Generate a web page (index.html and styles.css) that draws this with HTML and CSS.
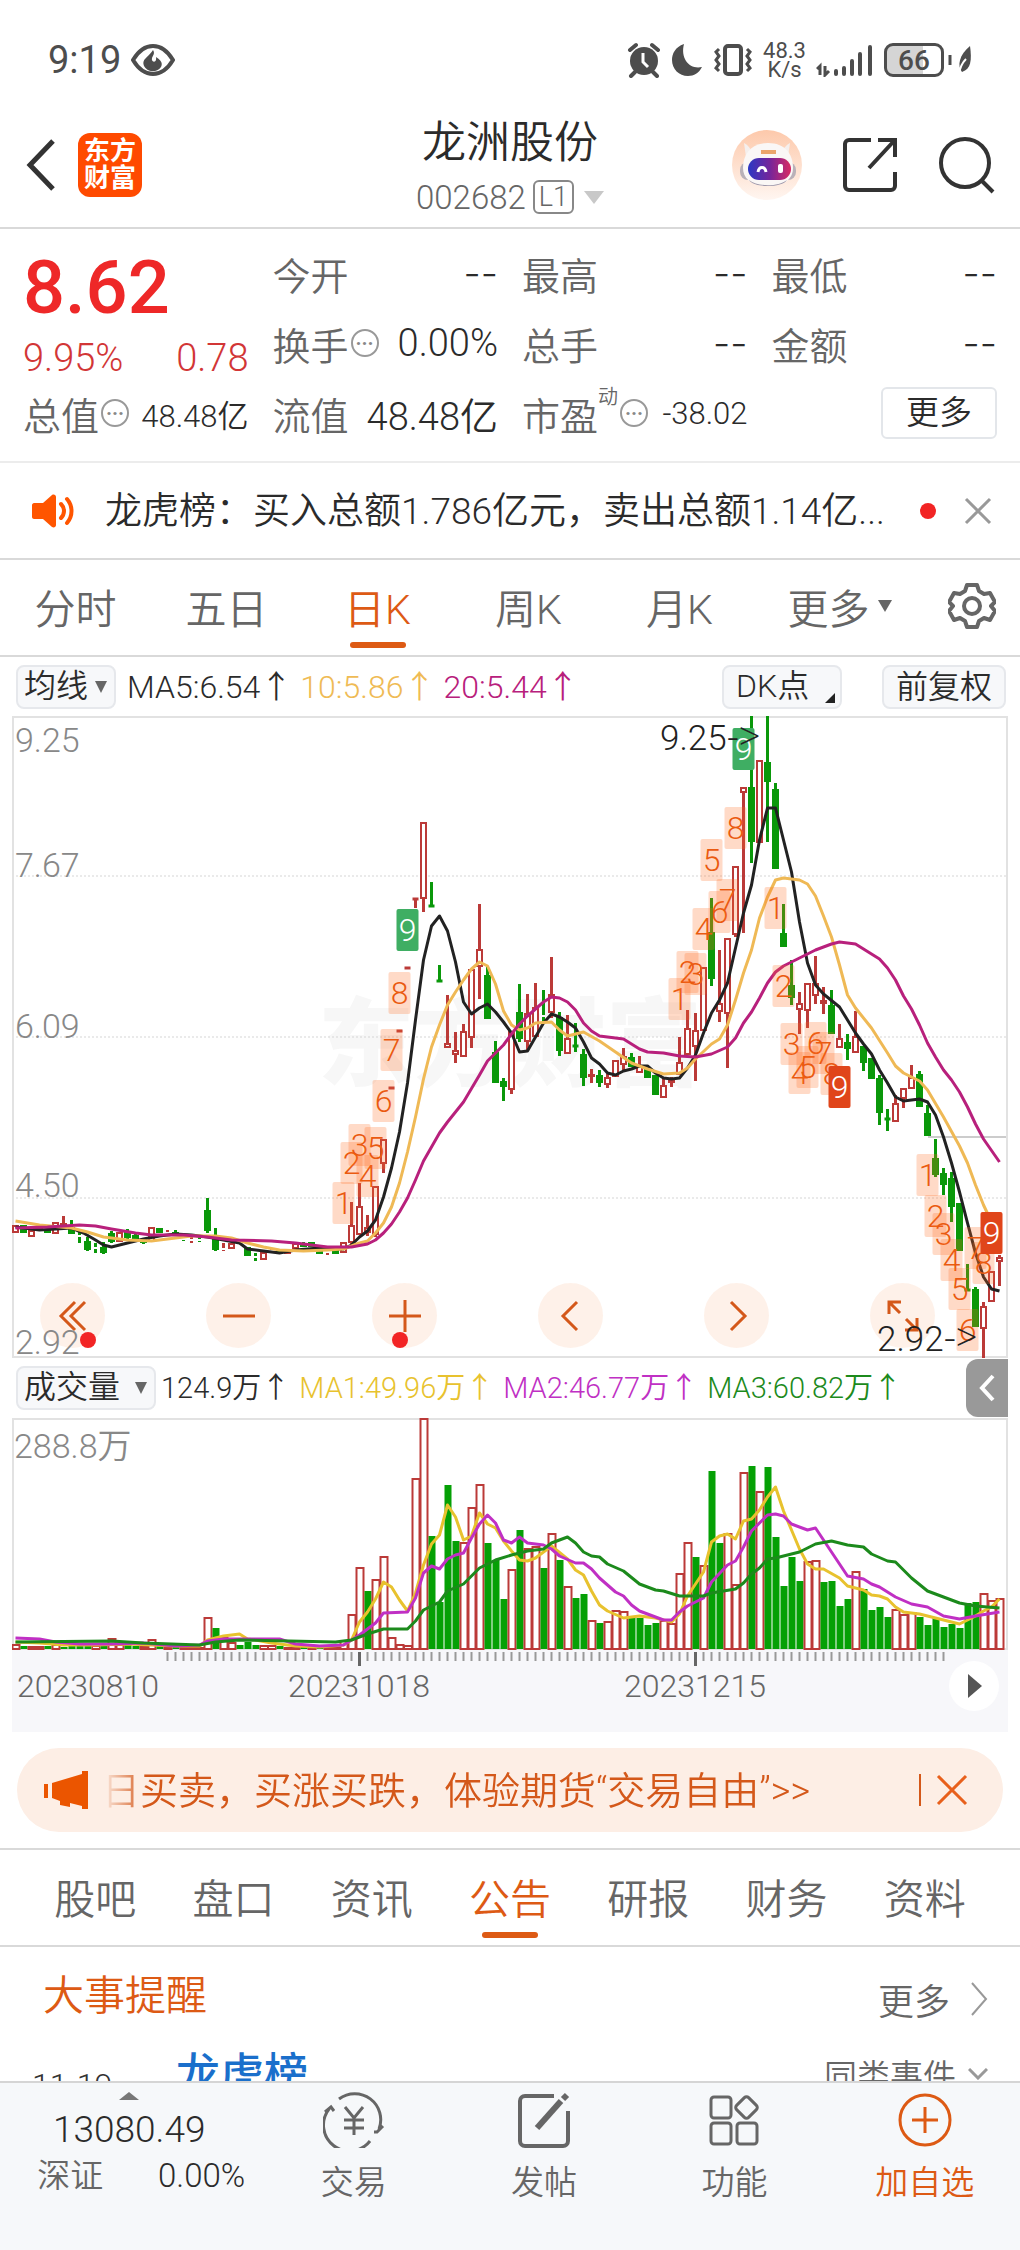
FILE: index.html
```html
<!DOCTYPE html>
<html lang="zh-CN">
<head>
  <meta charset="UTF-8" />
  <meta name="viewport" content="width=device-width, initial-scale=1.0" />
  <title>龙洲股份 002682</title>
  <link rel="stylesheet" href="styles.css">
</head>
<body>
  <div class="status-bar">
    <span class="clock">9:19</span>
    <svg class="eye" width="44" height="32" viewBox="0 0 44 32"><path d="M2 16C8 6 14 2 22 2s14 4 20 14c-6 10-12 14-20 14S8 26 2 16z" fill="none" stroke="#4d4d4d" stroke-width="4"/><path d="M22 6c3 5-2 6-1 10 1 3 5 2 4-3 5 3 7 6 5 10a10 10 0 0 1-17-1c-3-7 5-9 9-16z" fill="#4d4d4d"/></svg>
    <div class="status-icons">
      <svg width="34" height="36" viewBox="0 0 34 36"><g stroke="#4d4d4d" stroke-width="4" stroke-linecap="round"><path d="M3 8l6-5M31 8l-6-5M8 30l-4 4M26 30l4 4"/></g><circle cx="17" cy="19" r="14" fill="#4d4d4d"/><path d="M16 11v9l5 5" fill="none" stroke="#fff" stroke-width="3"/></svg>
      <svg width="32" height="34" viewBox="0 0 32 34"><path d="M13 1C4 4 1 11 1 17c0 9 7 16 16 16 6 0 11-3 14-9C19 27 9 16 13 1z" fill="#4d4d4d"/></svg>
      <svg width="40" height="34" viewBox="0 0 40 34"><rect x="12" y="3" width="16" height="28" rx="3" fill="none" stroke="#4d4d4d" stroke-width="4"/><path d="M6 6l-3 3 3 4-3 4 3 4-3 4 3 3M34 6l3 3-3 4 3 4-3 4 3 4-3 3" fill="none" stroke="#4d4d4d" stroke-width="3"/></svg>
      <span class="speed">48.3<br>K/s</span>
      <svg class="signal" width="58" height="34" viewBox="0 0 58 34"><g stroke="#4d4d4d" stroke-width="4" stroke-linecap="round"><path d="M20 28v3M28 25v6M36 18v13M44 11v20M54 4v27"/></g><path d="M4 32V23l-3 3M9 23v9l4-4" fill="none" stroke="#4d4d4d" stroke-width="3"/></svg>
      <span class="battery">66</span>
      <svg width="24" height="30" viewBox="0 0 24 30"><path d="M2 10v10" stroke="#4d4d4d" stroke-width="3"/><path d="M22 1c2 14 1 23-8 26-5-6-3-17 8-26z" fill="#4d4d4d"/><path d="M11 29c1-7 4-12 7-15" stroke="#fff" stroke-width="2" fill="none"/></svg>
    </div>
  </div>

  <header class="header">
    <div class="header-left">
      <button class="icon-btn" aria-label="返回"><svg width="34" height="54" viewBox="0 0 34 54"><path d="M29 3L6 27l23 24" fill="none" stroke="#333" stroke-width="5"/></svg></button>
      <div class="logo">东方<br>财富</div>
    </div>
    <div class="header-title">
      <h1>龙洲股份</h1>
      <div class="code">002682<span class="level">L1</span><i class="tri"></i></div>
    </div>
    <div class="header-right">
      <button class="icon-btn" aria-label="助手">
        <svg width="70" height="70" viewBox="0 0 70 70">
          <defs>
            <linearGradient id="halo" x1="0" y1="0" x2="0" y2="1"><stop offset="0" stop-color="#fdc9ab"/><stop offset="1" stop-color="#fff6f1"/></linearGradient>
            <linearGradient id="visor"><stop offset="0" stop-color="#2b38c4"/><stop offset="0.5" stop-color="#74259b"/><stop offset="1" stop-color="#d82a63"/></linearGradient>
          </defs>
          <circle cx="35" cy="35" r="35" fill="url(#halo)"/>
          <path d="M12 13c4 2 7 6 8 10l-6 4zM58 13c-4 2-7 6-8 10l6 4z" fill="#f5efed"/>
          <rect x="8" y="32" width="56" height="18" rx="8" fill="#b9b1b8"/>
          <path d="M36 13c17 0 25 11 25 25 0 11-9 18-25 18S11 49 11 38c0-14 8-25 25-25z" fill="#faf7f6"/>
          <path d="M17 50c9 7 29 7 38 0-5 8-33 8-38 0z" fill="#9c95a8"/>
          <rect x="16" y="28" width="43" height="22" rx="11" fill="url(#visor)"/>
          <path d="M26 42c1-6 7-6 8 0" fill="none" stroke="#fff" stroke-width="3"/>
          <rect x="46" y="34" width="5" height="9" rx="2" fill="#fff"/>
          <path d="M29 22h15" stroke="#eba66c" stroke-width="4"/>
        </svg>
      </button>
      <button class="icon-btn" aria-label="分享"><svg width="56" height="56" viewBox="0 0 56 56"><path d="M29 3H7a4 4 0 0 0-4 4v42a4 4 0 0 0 4 4h42a4 4 0 0 0 4-4V35M36 3h17v17M52 4L27 31" fill="none" stroke="#333" stroke-width="4"/></svg></button>
      <button class="icon-btn" aria-label="搜索"><svg width="58" height="58" viewBox="0 0 58 58"><circle cx="27" cy="27" r="24" fill="none" stroke="#333" stroke-width="4"/><path d="M43 44l12 12" stroke="#333" stroke-width="4"/></svg></button>
    </div>
  </header>

  <main class="content">
    <section class="quote">
      <div class="quote-col">
        <div class="price">8.62</div>
        <div class="change"><span>9.95%</span><span>0.78</span></div>
        <div class="item"><span class="label">总值</span><i class="info">···</i><span class="value small">48.48亿</span></div>
      </div>
      <div class="quote-col">
        <div class="item"><span class="label">今开</span><span class="value none">--</span></div>
        <div class="item"><span class="label">换手</span><i class="info">···</i><span class="value">0.00%</span></div>
        <div class="item"><span class="label">流值</span><span class="value">48.48亿</span></div>
      </div>
      <div class="quote-col">
        <div class="item"><span class="label">最高</span><span class="value none">--</span></div>
        <div class="item"><span class="label">总手</span><span class="value none">--</span></div>
        <div class="item"><span class="label">市盈</span><sup>动</sup><i class="info">···</i><span class="value small">-38.02</span></div>
      </div>
      <div class="quote-col">
        <div class="item"><span class="label">最低</span><span class="value none">--</span></div>
        <div class="item"><span class="label">金额</span><span class="value none">--</span></div>
        <div class="item"><button class="more-btn">更多</button></div>
      </div>
    </section>

    <section class="news">
      <svg width="42" height="36" viewBox="0 0 42 36"><path d="M2 10h9L20 2c2-1 4 0 4 2v28c0 2-2 3-4 2l-9-8H2c-1 0-2-1-2-2V12c0-1 1-2 2-2z" fill="#ff5500"/><path d="M29 11c4 4 4 10 0 14M35 6c6 7 6 17 0 24" fill="none" stroke="#ff5500" stroke-width="4" stroke-linecap="round"/></svg>
      <a href="#" class="news-text">龙虎榜：买入总额1.786亿元，卖出总额1.14亿...</a>
      <i class="dot"></i>
      <button class="icon-btn" aria-label="关闭"><svg width="28" height="28" viewBox="0 0 28 28"><path d="M2 2l24 24M26 2L2 26" stroke="#999" stroke-width="3"/></svg></button>
    </section>

    <nav class="period-tabs">
      <button class="tab">分时</button>
      <button class="tab">五日</button>
      <button class="tab active">日K</button>
      <button class="tab">周K</button>
      <button class="tab">月K</button>
      <button class="tab more">更多<i class="tri dark"></i></button>
      <button class="tab" aria-label="设置"><svg width="48" height="48" viewBox="0 0 48 48" fill="none" stroke="#666" stroke-width="4" stroke-linejoin="round"><path d="M19 3h10l2 6 5 3 6-1 5 9-4 4 4 5-5 9-6-2-5 3-2 6H19l-2-6-5-3-6 2-5-9 4-5-4-4 5-9 6 1 5-3z"/><circle cx="24" cy="24" r="8"/></svg></button>
    </nav>

    <div class="toolbar">
      <label class="picker"><select aria-label="主图指标"><option>均线</option></select></label>
      <div class="legend">
        <span>MA5:6.54↑</span><span class="yellow">10:5.86↑</span><span class="pink">20:5.44↑</span>
      </div>
      <label class="picker corner"><select aria-label="DK点"><option>DK点</option></select></label>
      <button class="chip">前复权</button>
    </div>

    <div class="chart-box">
      <svg id="kline" class="chart" viewBox="0 0 996 642"></svg>
      <div class="controls">
        <button class="round" aria-label="最早"><svg width="30" height="32" viewBox="0 0 30 32"><path d="M17 2L3 16l14 14M27 2L13 16l14 14"/></svg><i class="dot"></i></button>
        <button class="round" aria-label="缩小"><svg width="32" height="32" viewBox="0 0 32 32"><path d="M0 16h32"/></svg></button>
        <button class="round" aria-label="放大"><svg width="32" height="32" viewBox="0 0 32 32"><path d="M0 16h32M16 0v32"/></svg><i class="dot left"></i></button>
        <button class="round" aria-label="左移"><svg width="32" height="32" viewBox="0 0 32 32"><path d="M22 2L8 16l14 14"/></svg></button>
        <button class="round" aria-label="右移"><svg width="32" height="32" viewBox="0 0 32 32"><path d="M10 2l14 14-14 14"/></svg></button>
        <button class="round" aria-label="全屏"><svg width="32" height="32" viewBox="0 0 32 32"><path d="M14 2H2v12M2 2l11 11M30 18v12H18M30 30L19 19"/></svg></button>
      </div>
      <svg id="marks" class="chart marks" viewBox="0 0 996 642"></svg>
    </div>

    <div class="toolbar volume-bar">
      <label class="picker wide"><select aria-label="副图指标"><option>成交量</option></select></label>
      <div class="legend small">
        <span>124.9万↑</span><span class="gold">MA1:49.96万↑</span><span class="violet">MA2:46.77万↑</span><span class="green">MA3:60.82万↑</span>
      </div>
      <button class="fold" aria-label="收起"><svg width="18" height="28" viewBox="0 0 18 28"><path d="M15 2L4 14l11 12" fill="none" stroke="#fff" stroke-width="4"/></svg></button>
    </div>

    <div class="chart-box">
      <svg id="volume" class="chart" viewBox="0 0 996 232"></svg>
    </div>
    <div class="axis">
      <svg id="ticks" class="chart" viewBox="0 0 996 82"></svg>
      <button class="play" aria-label="播放"><svg width="14" height="24" viewBox="0 0 14 24"><path d="M0 0l14 12L0 24z" fill="#555"/></svg></button>
    </div>

    <div class="promo">
      <svg width="44" height="38" viewBox="0 0 44 38"><path d="M0 13h4v14H0zM8 12L38 3V0h6v38h-6v-3l-12-3v4l-10-2v-4l-8-3z" fill="#eb5500"/></svg>
      <a href="#" class="promo-text">日买卖，买涨买跌，体验期货“交易自由”&gt;&gt;</a>
      <button class="icon-btn close" aria-label="关闭广告"><svg width="32" height="32" viewBox="0 0 32 32"><path d="M2 2l28 28M30 2L2 30" stroke="#e8601c" stroke-width="3"/></svg></button>
    </div>

    <nav class="info-tabs">
      <button class="tab">股吧</button>
      <button class="tab">盘口</button>
      <button class="tab">资讯</button>
      <button class="tab active">公告</button>
      <button class="tab">研报</button>
      <button class="tab">财务</button>
      <button class="tab">资料</button>
    </nav>

    <section class="events">
      <div class="events-head">
        <h2>大事提醒</h2>
        <a href="#">更多<svg width="18" height="34" viewBox="0 0 18 34"><path d="M2 1l14 16L2 33" fill="none" stroke="#999" stroke-width="2"/></svg></a>
      </div>
      <div class="event">
        <time>11-19</time>
        <a href="#" class="event-name">龙虎榜</a>
        <a href="#" class="event-kind">同类事件<svg width="20" height="12" viewBox="0 0 20 12"><path d="M1 1l9 9 9-9" fill="none" stroke="#999" stroke-width="3"/></svg></a>
      </div>
    </section>
  </main>

  <footer class="bottom-bar">
    <div class="index">
      <i class="tri up"></i>
      <div class="index-value">13080.49</div>
      <div class="index-row"><span>深证</span><b>0.00%</b></div>
    </div>
    <button class="nav-item">
      <svg width="62" height="56" viewBox="0 0 62 56" fill="none" stroke="#666" stroke-width="3"><path d="M16 7a26 26 0 0 1 40 30M47 49A26 26 0 0 1 6 17M51 40l3 0 6-6M2 20l6-5 3 4" /><path d="M22 15l9 11 9-11M31 26v17M21 28h20M21 36h20"/></svg>
      <span>交易</span>
    </button>
    <button class="nav-item">
      <svg width="54" height="56" viewBox="0 0 54 56" fill="none" stroke="#666" stroke-width="4"><path d="M37 4H8a5 5 0 0 0-5 5v40a5 5 0 0 0 5 5h38a5 5 0 0 0 5-5V19"/><path d="M20 36l24-27" stroke-width="6"/><path d="M46 7l4-4" stroke-width="6"/></svg>
      <span>发帖</span>
    </button>
    <button class="nav-item">
      <svg width="52" height="56" viewBox="0 0 52 56" fill="none" stroke="#666" stroke-width="3"><rect x="3" y="5" width="20" height="21" rx="3"/><rect x="3" y="31" width="20" height="21" rx="3"/><rect x="29" y="31" width="20" height="21" rx="3"/><rect x="30" y="7" width="17" height="17" rx="3" transform="rotate(45 38.5 15.5)"/></svg>
      <span>功能</span>
    </button>
    <button class="nav-item add">
      <svg width="56" height="56" viewBox="0 0 56 56" fill="none" stroke="#dd5a14" stroke-width="3"><circle cx="28" cy="28" r="25"/><path d="M28 15v26M15 28h26"/></svg>
      <span>加自选</span>
    </button>
  </footer>

  <script src="chart.js"></script>
</body>
</html>
```
FILE: styles.css
```css
* {
  box-sizing: border-box;
  margin: 0;
  padding: 0;
}

body {
  height: 100vh;
  display: flex;
  flex-direction: column;
  overflow: hidden;
  font-family: Roboto, "Noto Sans CJK SC", sans-serif;
  font-weight: 350;
  color: #2b2b2b;
  background: #fff;
}

button,
select {
  font: inherit;
  color: inherit;
  border: none;
  background: none;
  appearance: none;
  cursor: pointer;
}

a {
  color: inherit;
  text-decoration: none;
}

i {
  font-style: normal;
}

svg {
  display: block;
  flex: none;
}

.icon-btn {
  display: flex;
  flex: none;
}

/* status bar */
.status-bar {
  flex: none;
  height: 103px;
  padding: 16px 48px 0;
  display: flex;
  align-items: center;
  color: #4d4d4d;
}

.clock {
  font-size: 38px;
  font-weight: 400;
  margin-right: 10px;
}

.status-icons {
  margin-left: auto;
  display: flex;
  align-items: center;
  gap: 10px;
}

.speed {
  font-size: 22px;
  line-height: 19px;
  font-weight: 400;
  text-align: center;
}

.battery {
  width: 60px;
  height: 34px;
  border: 3px solid #4d4d4d;
  border-radius: 9px;
  background: linear-gradient(90deg, #d5d5d5 66%, #fff 66%);
  font-size: 28px;
  line-height: 29px;
  font-weight: 500;
  text-align: center;
}

.battery + svg {
  margin-left: -6px;
}

/* header */
.header {
  flex: none;
  height: 126px;
  padding: 0 24px;
  display: grid;
  grid-template-columns: 1fr auto 1fr;
  border-bottom: 2px solid #d9d9d9;
}

.header-left,
.header-right {
  display: flex;
  align-items: center;
}

.header-left {
  gap: 20px;
}

.header-right {
  justify-content: flex-end;
  gap: 40px;
}

.logo {
  width: 64px;
  height: 64px;
  padding-top: 5px;
  border-radius: 12px;
  background: #ff4a00;
  color: #fff;
  font-size: 26px;
  line-height: 27px;
  font-weight: 700;
  text-align: center;
}

.header-title {
  padding-top: 10px;
  text-align: center;
}

h1 {
  font-size: 44px;
  line-height: 60px;
  font-weight: 350;
}

.code {
  height: 48px;
  display: flex;
  align-items: center;
  justify-content: center;
  font-size: 33px;
  color: #666;
}

.level {
  height: 34px;
  margin: 0 10px 0 7px;
  padding: 0 4px;
  border: 2px solid #888;
  border-radius: 6px;
  font-size: 27px;
  line-height: 30px;
}

.tri {
  border: 10px solid transparent;
  border-top: 13px solid #c8c8c8;
  border-bottom: 0;
}

.tri.dark {
  border-width: 12px 7px 0;
  border-top-color: #666;
  margin-left: 8px;
}

.tri.up {
  border-top: 0;
  border-bottom: 8px solid #777;
}

.content {
  flex: 1;
  min-height: 0;
  overflow: hidden;
}

/* quote */
.quote {
  display: grid;
  grid-template-columns: repeat(4, 1fr);
  gap: 24px;
  padding: 12px 23px 10px;
  border-bottom: 2px solid #ececec;
}

.price {
  font-size: 74px;
  line-height: 94px;
  font-weight: 500;
  color: #ee2828;
}

.change {
  display: flex;
  justify-content: space-between;
  font-size: 38px;
  line-height: 46px;
  color: #d23636;
}

.item {
  height: 70px;
  padding-bottom: 6px;
  display: flex;
  align-items: center;
}

.label {
  font-size: 38px;
  color: #666;
}

.value {
  margin-left: auto;
  font-size: 38px;
}

.value.small {
  font-size: 31px;
}

.value.none {
  font-family: Inter, sans-serif;
}

.info {
  width: 28px;
  height: 28px;
  margin-left: 2px;
  border: 2px solid #999;
  border-radius: 50%;
  color: #888;
  font-size: 20px;
  line-height: 24px;
  font-weight: 700;
  text-align: center;
}

.item sup {
  align-self: flex-start;
  font-size: 20px;
  line-height: 32px;
  color: #666;
}

.more-btn {
  width: 116px;
  height: 52px;
  margin-left: auto;
  border: 2px solid #e3e6ea;
  border-radius: 6px;
  font-size: 33px;
  line-height: 46px;
}

/* news */
.news {
  height: 97px;
  padding: 0 28px 0 32px;
  display: flex;
  align-items: center;
  border-bottom: 2px solid #d9d9d9;
}

.news-text {
  flex: 1;
  margin-left: 31px;
  padding-bottom: 6px;
  font-size: 37px;
  white-space: nowrap;
}

.dot {
  width: 16px;
  height: 16px;
  border-radius: 50%;
  background: #f22424;
}

.news .dot {
  margin-right: 28px;
}

/* tabs */
.period-tabs,
.info-tabs {
  display: grid;
  height: 97px;
  border-bottom: 2px solid #d9d9d9;
}

.period-tabs {
  grid-template-columns: repeat(5, 151fr) 169fr 96fr;
}

.info-tabs {
  grid-template-columns: repeat(7, 1fr);
  padding: 0 26px;
  border-top: 2px solid #d9d9d9;
}

.tab {
  position: relative;
  padding-bottom: 4px;
  display: flex;
  align-items: center;
  justify-content: center;
  font-size: 41px;
  color: #666;
}

.tab.active {
  color: #dd5a14;
}

.tab.active::after {
  content: "";
  position: absolute;
  left: 50%;
  bottom: 7px;
  width: 56px;
  height: 6px;
  margin-left: -28px;
  border-radius: 3px;
  background: #dd5a14;
}

/* chart toolbars */
.toolbar {
  height: 59px;
  padding: 0 14px 0 16px;
  display: flex;
  align-items: center;
}

.picker,
.chip {
  height: 44px;
  border: 2px solid #e6e8ec;
  border-radius: 8px;
  background: #f7f8fa;
  font-size: 32px;
  line-height: 38px;
}

.picker {
  position: relative;
}

.picker select {
  width: 96px;
  height: 38px;
  padding-left: 6px;
  line-height: 38px;
}

.picker::after {
  content: "";
  position: absolute;
  right: 7px;
  top: 14px;
  border: 6px solid transparent;
  border-top: 12px solid #666;
  border-bottom: 0;
}

.picker.wide select {
  width: 136px;
}

.picker.corner {
  margin-left: auto;
  margin-right: 40px;
}

.picker.corner select {
  width: 116px;
  padding-left: 12px;
}

.picker.corner::after {
  right: 5px;
  top: 26px;
  border: 5px solid #222;
  border-top-color: transparent;
  border-left-color: transparent;
}

.chip {
  width: 124px;
}

.legend {
  display: flex;
  gap: 8px;
  margin-left: 11px;
  padding-bottom: 6px;
  font-size: 32px;
  white-space: nowrap;
}

.legend.small {
  gap: 9px;
  margin-left: 5px;
  font-size: 29px;
}

.yellow { color: #efbb55; }
.pink { color: #b8207c; }
.gold { color: #e8c22e; }
.violet { color: #c030c4; }
.green { color: #1c8a1c; }

.volume-bar {
  height: 60px;
  padding-right: 12px;
}

.fold {
  width: 42px;
  height: 58px;
  margin-left: auto;
  display: flex;
  align-items: center;
  justify-content: center;
  border-radius: 12px 0 0 12px;
  background: #999;
}

/* charts */
.chart-box {
  position: relative;
  margin: 0 12px;
}

.chart {
  width: 100%;
  height: auto;
}

.marks {
  position: absolute;
  inset: 0;
  pointer-events: none;
}

.frame { fill: none; stroke: #e2e2e2; stroke-width: 2; }
.grid { stroke: #d5d5d5; stroke-dasharray: 2 2; }
.up { fill: #fff; stroke: #bb3a38; stroke-width: 2; }
.down { fill: #0a980a; stroke: #0a980a; stroke-width: 2; }
path.up,
path.down { stroke-width: 3; }
.line { fill: none; stroke-width: 3; stroke-linejoin: round; }
.scale { font-size: 34px; fill: #888; }
.mark { font-size: 35px; fill: #222; }
.arrow { font-family: "Open Sans", sans-serif; font-size: 38px; font-variant-ligatures: none; }
.watermark { font-size: 96px; font-weight: 900; fill: #f7f7f7; }
.td { fill: #ff6a20; fill-opacity: 0.25; }
.td-text { font-size: 32px; fill: #ea5a10; text-anchor: middle; }
.td.sell { fill: #3fae63; fill-opacity: 1; }
.td.buy { fill: #e0451a; fill-opacity: 1; }
.td-text.sell,
.td-text.buy { fill: #fff; }
.tick { stroke: #999; stroke-width: 2; }
.tick.major { stroke: #666; stroke-width: 3; }
.date { font-size: 32px; fill: #666; }

.controls {
  position: absolute;
  left: 28px;
  right: 73px;
  bottom: 10px;
  display: flex;
  justify-content: space-between;
}

.round {
  position: relative;
  width: 65px;
  height: 65px;
  display: flex;
  align-items: center;
  justify-content: center;
  border-radius: 50%;
  background: rgba(253, 236, 226, 0.75);
}

.round svg {
  fill: none;
  stroke: #d4581a;
  stroke-width: 3;
}

.round .dot {
  position: absolute;
  right: 9px;
  bottom: 0;
}

.round .dot.left {
  right: 29px;
}

.axis {
  position: relative;
  margin: 0 12px 16px;
  background: #f7f7fa;
}

.play {
  position: absolute;
  right: 9px;
  top: 11px;
  width: 50px;
  height: 50px;
  padding-left: 2px;
  display: flex;
  align-items: center;
  justify-content: center;
  border-radius: 50%;
  background: #fff;
}

/* promo */
.promo {
  height: 84px;
  margin: 0 17px 16px;
  padding: 0 35px 0 27px;
  display: flex;
  align-items: center;
  border-radius: 42px;
  background: #fdeee5;
  color: #d4581a;
}

.promo-text {
  flex: 1;
  margin-left: 14px;
  padding-bottom: 6px;
  font-size: 38px;
  white-space: nowrap;
  -webkit-mask-image: linear-gradient(90deg, transparent, #000 44px);
  mask-image: linear-gradient(90deg, transparent, #000 44px);
}

.close {
  padding-left: 15px;
  border-left: 2px solid #d4581a;
}

/* events */
.info-tabs {
  height: 99px;
}

.events {
  padding: 14px 32px 0;
}

.events-head,
.event {
  display: flex;
  align-items: center;
}

.events-head {
  height: 62px;
  padding-left: 11px;
}

h2 {
  font-size: 41px;
  font-weight: 350;
  color: #dd5a14;
}

.events-head a {
  margin: 14px 0 0 auto;
  display: flex;
  align-items: center;
  gap: 20px;
  font-size: 36px;
  color: #666;
}

.event {
  height: 80px;
  margin-top: 8px;
  color: #666;
}

time {
  width: 144px;
  padding-top: 28px;
  font-size: 32px;
  color: #333;
}

.event-name {
  font-size: 44px;
  font-weight: 500;
  color: #1a6fcb;
}

.event-kind {
  margin-left: auto;
  padding-top: 6px;
  display: flex;
  align-items: center;
  gap: 12px;
  font-size: 33px;
}

/* bottom bar */
.bottom-bar {
  flex: none;
  height: 169px;
  padding-top: 9px;
  display: grid;
  grid-template-columns: 258fr repeat(4, 190fr);
  align-items: start;
  border-top: 2px solid #d5d5d5;
  background: #f6f8fa;
}

.index {
  display: flex;
  flex-direction: column;
  align-items: center;
}

.index-value {
  margin-top: 7px;
  font-size: 37px;
  line-height: 46px;
}

.index-row {
  width: 232px;
  padding-left: 24px;
  display: flex;
  justify-content: space-between;
  font-size: 33px;
  line-height: 46px;
  color: #666;
}

.index-row b {
  font-weight: 350;
  color: #2b2b2b;
}

.nav-item {
  display: flex;
  flex-direction: column;
  align-items: center;
  gap: 12px;
  font-size: 33px;
  line-height: 46px;
  color: #666;
}

.nav-item.add {
  color: #dd5a14;
}
```
FILE: chart.js
```js
const STEP = 8;
const x = i => 3.5 + i * STEP;

// colour, high, body top, body bottom, low
const candles = `r509,509,517,517 g509,509,517,517 r514,514,521,521 r512,512,515,515 g513,513,517,517 r506,506,518,518
r500,507,511,511 g504,511,518,518 g515,519,521,527 g521,525,534,535 g527,531,533,537 g526,531,537,538
g515,517,526,527 r516,516,526,526 g513,515,522,523 g517,519,525,526 g523,523,527,528 r511,511,526,526
g512,512,517,517 r514,516,518,520 g514,516,519,520 g520,522,524,525 r521,523,525,527 g521,523,525,526
g482,494,515,517 g512,521,534,535 r527,532,534,535 r527,527,533,533 r527,527,529,529 g531,531,540,540
g537,540,542,545 r536,536,544,544 r532,534,536,537 g533,533,538,538 r535,535,538,538 r527,527,533,533
g526,527,531,531 g526,526,531,531 g532,532,538,538 r532,535,537,539 g533,533,538,538 r526,526,537,537
r486,509,527,530 r467,490,519,519 r499,511,517,520 r470,470,519,521 r423,423,448,457 r372,372,372,372
r315,315,315,315 r252,252,252,252 r183,183,183,192 r106,106,183,196 g166,190,190,190 g249,265,265,265
r279,327,332,332 r316,334,339,347 r308,315,341,341 r253,253,322,332 r188,233,251,283 g251,259,303,303
g325,336,367,367 g362,365,371,385 r315,315,374,378 g268,296,323,326 r278,297,326,334 r267,291,321,321
g274,299,301,306 r241,278,297,302 g296,301,335,340 r299,322,338,338 g307,330,331,336 g333,338,362,370
r353,358,361,367 g354,359,367,371 r358,361,369,372 r344,344,361,361 r332,340,349,354 g337,341,351,351
r340,350,357,357 g351,351,362,362 g359,359,379,379 r362,369,382,382 r361,364,367,371 r321,346,359,359
r294,312,339,339 r297,314,331,365 r251,251,315,315 g182,216,263,270 r234,287,296,306 r222,222,298,352
r150,150,219,221 r71,71,77,217 g0,71,126,147 r44,44,127,127 g0,46,66,126 g67,73,153,153
g188,217,231,231 g244,269,282,289 r276,287,294,318 r267,267,295,312 r240,267,280,288 r271,284,288,298
g274,289,318,318 r308,322,332,332 g318,326,333,344 r295,320,337,337 g330,330,347,355 g342,342,363,363
g359,362,397,409 g393,403,404,415 r379,387,406,406 r372,372,383,392 r349,361,373,373 g355,358,391,391
g389,397,420,420 g423,442,459,461 g452,457,469,479 g456,462,491,506 g487,487,535,535 g548,574,574,574
g571,573,611,611 r586,590,613,642 r555,555,586,586 r539,541,546,570`.split(/\s+/);

// colour and top edge of every bar
const bars = `r226 g228 r228 r228 g228 r226 g229 g228 g228 g228 r227 g227 r220 r226 g227 g228 r228 r221 g228 r229 g229 r228 r229 r229
r199 g210 r219 r224 g227 g224 g227 r227 r227 g228 r229 r228 g229 r227 g229 r228 r228 r222 r196 r149 g173 r161 r138 r219 r226 r227
r60 r0 g118 g184 g67 g123 r124 r89 r66 g125 g142 g181 r151 g112 r130 r128 g150 r115 g142 r168 g180 g176 r202 g205 r203 r192 r193
g200 g200 g207 g205 r202 r205 r155 r124 g139 r147 g53 g125 r115 r166 r54 g48 r73 g49 g119 g168 g139 g163 r143 r142 g164 g163 g188
g181 r153 g171 g192 g189 g199 r191 r196 r194 g199 g207 g200 g209 g206 g210 g185 g184 r175 r182 r180`.split(/\s+/);

// index,y pairs
const ma5 = "0,511 3,514 5,513 7,512 8.5,517 10,524 11,529 12,531 13,529 14,527 16,523 18,520 20,518 22,519 24,521 26,524 28,527 29,533 31,535 33,537 35,534 38,532 41,533 42,529 43,521 44,515 45,504 46,481 47,452 48,416 49,367 50,304 51,244 52,210 53,200 54,215 55,246 56,286 57,298 58,292 59,288 60,296 61,306 62,317 63,336 64,335 65,321 66,307 67,298 68,301 69,306 70,312 71,326 72,342 73,348 74,357 75,359 76,355 77,353 78,350 79,350 80,357 81,362 82,363 83,362 84,352 85,339 86,317 87,297 88,284 89,267 90,232 91,197 92,169 93,124 94,92 95,92 96,124 97,156 98,206 99,247 100,269 101,278 103,291 104,304 105,317 106,328 107,338 108,354 109,367 110,381 111,385 113,383 114,386 115,399 116,421 117,447 118,476 119,507 120,537 121,561 122,573 123,575";
const ma10 = "0,505 3,509 7,512 9,516 11,521 14,524 17,525 19,523 22,520 25,520 27,522 29,527 31,531 33,534 36,535 39,534 41,533 43,527 44,525 45,517 46,507 47,491 48,467 49,436 50,401 51,363 52,331 53,309 54,289 55,276 56,264 57,253 58,246 59,250 60,268 61,295 62,309 63,314 64,312 65,307 67,306 68,314 69,320 71,316 73,325 75,336 77,347 79,353 81,358 83,357 84,352 85,343 87,328 88,323 89,309 90,284 91,257 92,234 93,202 94,181 95,164 96,162 98,164 99,168 100,180 101,200 102,221 103,249 104,279 105,292 107,312 109,337 110,350 111,357 112,361 113,365 114,374 116,401 118,430 119,447 120,469 121,489 122,506";
const ma20 = "0,512 4,511 6,510 8,509 10,510 12,513 15,517 17,519 21,519 24,521 27,524 32,525 35,527 39,531 42,531 44,528 45,524 46,517 47,508 48,496 49,482 50,464 51,445 53,417 54,406 56,386 58,359 59,345 61,329 62,318 63,308 64,300 65,293 66,286 67,281 68,282 69,286 70,294 71,307 72,315 73,320 75,322 76,323 78,333 79,336 81,337 83,340 85,341 87,338 89,331 90,322 91,307 92,296 93,282 94,267 95,256 96,250 98,242 100,234 102,228 103,226 105,228 106,233 108,243 109,252 110,264 111,280 112,293 113,309 114,327 115,341 116,354 117,364 118,376 119,391 120,408 121,423 123,446";
const vol5 = "0,224 3,225 6,227 10,227 14,226 17,227 20,228 23,228 24,222 26,218 28,216 29,221 30,222 32,225 35,228 38,229 41,227 42,222 43,204 44,194 45,181 46,164 47,169 48,182 49,193 50,175 51,147 52,126 53,117 54,87 55,99 56,122 57,118 58,95 59,106 60,110 61,123 62,133 63,142 64,143 65,140 67,128 69,141 70,152 71,157 72,173 73,187 74,193 76,200 78,198 80,200 82,204 83,196 84,178 86,154 87,124 88,118 89,116 90,121 91,103 92,101 93,92 94,79 95,69 96,93 97,112 98,131 99,146 100,151 101,151 103,160 104,168 106,172 107,177 108,178 109,181 110,189 111,194 113,196 115,200 117,204 118,206 119,202 120,198 121,193 122,189 123,181";
const vol10 = "0,220 3,221 5,224 8,226 12,226 16,225 20,228 23,227 24,223 26,221 33,221 35,226 38,228 41,227 42,222 43,217 45,205 46,195 49,194 50,180 51,155 52,148 53,151 54,141 55,137 56,135 57,120 58,106 59,97 60,105 61,122 62,125 63,119 64,125 66,127 67,131 68,138 70,145 71,145 72,151 73,160 75,174 76,178 77,187 78,193 80,199 81,202 82,202 83,194 84,188 86,180 87,164 89,147 90,143 91,129 92,113 94,97 95,96 96,98 97,106 99,112 100,110 101,122 102,134 104,158 106,161 107,166 108,169 110,179 112,186 114,189 116,198 118,201 120,198 123,194";
const vol20 = "0,224 12,223 16,225 23,227 25,224 28,222 40,224 42,222 44,216 46,211 49,211 50,203 51,192 53,184 54,173 56,166 58,150 60,142 62,137 64,133 66,131 67,125 69,119 70,125 71,134 72,138 73,139 74,146 76,153 78,166 80,172 81,173 83,178 86,178 87,175 90,171 91,165 92,156 93,150 94,141 95,140 98,134 100,126 102,123 104,127 106,129 107,136 109,143 110,144 112,160 114,173 116,179 118,185 120,188 123,190";

// index, top, digit
const counts = [
  [41, 466, 1], [42, 426, 2], [43, 408, 3], [44, 439, 4], [45, 411, 5], [46, 364, 6], [47, 313, 7], [48, 256, 8], [49, 193, 9, "sell"],
  [83, 262, 1], [84, 235, 2], [85, 237, 3], [86, 192, 4], [87, 123, 5], [88, 175, 6], [89, 163, 7], [90, 91, 8], [91, 12, 9, "sell"],
  [95, 171, 1], [96, 249, 2], [97, 307, 3], [98, 336, 4], [99, 330, 5], [100, 306, 6], [101, 316, 7], [102, 337, 8], [103, 350, 9, "buy"],
  [114, 438, 1], [115, 479, 2], [116, 497, 3], [117, 523, 4], [118, 552, 5], [119, 593, 6], [120, 511, 7], [121, 526, 8], [122, 496, 9, "buy"]
];

function line(points, color) {
  const p = points.split(" ").map(s => s.split(",")).map(([i, y]) => x(+i) + "," + y).join(" ");
  return `<polyline class="line" points="${p}" stroke="${color}"/>`;
}

function text(cls, tx, ty, value) {
  return `<text class="${cls}" x="${tx}" y="${ty}">${value}</text>`;
}

function drawKline() {
  let out = text("watermark", 306, 362, "东方财富");
  [160, 321, 482].forEach(y => out += `<line class="grid" x1="0" x2="996" y1="${y}" y2="${y}"/>`);
  out += `<line x1="916" x2="996" y1="421" y2="421" stroke="#ccc" stroke-width="2"/>`;
  out += `<rect class="frame" x="1" y="1" width="994" height="640"/>`;
  candles.forEach((c, i) => {
    const cls = c[0] === "r" ? "up" : "down";
    const [high, top, bottom, low] = c.slice(1).split(",").map(Number);
    out += `<path class="${cls}" d="M${x(i)} ${high}V${top}M${x(i)} ${bottom}V${low}"/>`;
    out += bottom - top < 2
      ? `<path class="${cls}" d="M${x(i) - 3} ${top}h6"/>`
      : `<rect class="${cls}" x="${x(i) - 2.5}" y="${top + 1}" width="5" height="${bottom - top - 2}"/>`;
  });
  out += line(ma5, "#222") + line(ma10, "#efb955") + line(ma20, "#b8207c");
  document.getElementById("kline").innerHTML = out;
}

function drawMarks() {
  let out = "";
  counts.forEach(([i, top, n, kind = ""]) => {
    out += `<rect class="td ${kind}" x="${x(i) - 11}" y="${top}" width="22" height="42" rx="2"/>`;
    out += text("td-text " + kind, x(i), top + 32, n);
  });
  out += text("scale", 3, 36, "9.25") + text("scale", 3, 161, "7.67") + text("scale", 3, 322, "6.09");
  out += text("scale", 3, 481, "4.50") + text("scale", 3, 638, "2.92");
  const arrow = `<tspan class="arrow">-&gt;</tspan>`;
  out += text("mark", 648, 34, "9.25" + arrow) + text("mark", 865, 635, "2.92" + arrow);
  document.getElementById("marks").innerHTML = out;
}

function drawVolume() {
  let out = `<rect class="frame" x="1" y="1" width="994" height="230"/>`;
  bars.forEach((b, i) => {
    const top = +b.slice(1);
    out += b[0] === "r"
      ? `<rect class="up" x="${x(i) - 3}" y="${top + 1}" width="7" height="${230 - top}"/>`
      : `<rect fill="#05a005" x="${x(i) - 3}" y="${top}" width="7" height="${231 - top}"/>`;
  });
  out += line(vol5, "#e8c22e") + line(vol10, "#c030c4") + line(vol20, "#1c8a1c");
  out += text("scale", 2, 40, "288.8万");
  document.getElementById("volume").innerHTML = out;
}

function drawTicks() {
  let out = "";
  for (let i = 19; i < 117; i++) {
    const major = i === 43 || i === 85;
    out += `<line class="tick ${major ? "major" : ""}" x1="${x(i)}" x2="${x(i)}" y1="2" y2="${major ? 16 : 11}"/>`;
  }
  out += text("date", 5, 47, "20230810") + text("date", 276, 47, "20231018") + text("date", 612, 47, "20231215");
  document.getElementById("ticks").innerHTML = out;
}

drawKline();
drawMarks();
drawVolume();
drawTicks();
```
